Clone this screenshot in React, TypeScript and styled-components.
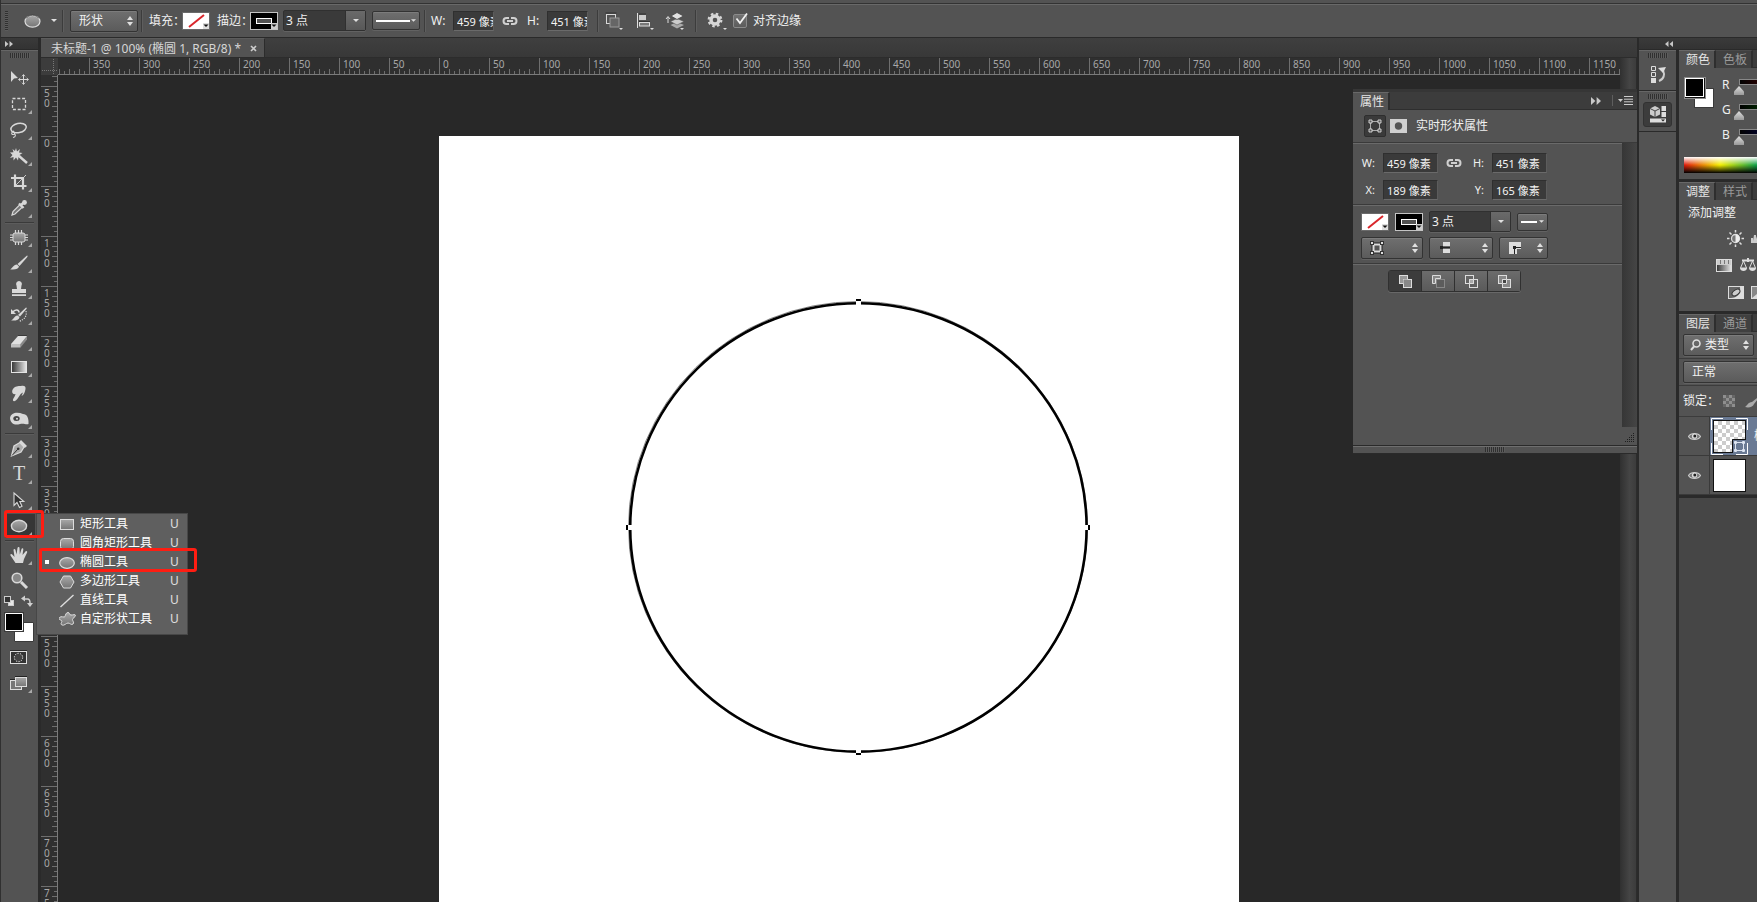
import React from "react";
import styled, { createGlobalStyle, css } from "styled-components";

const UI_FONT = `"Noto Sans", "Noto Sans CJK SC", sans-serif`;

const GlobalStyle = createGlobalStyle`
  *, *::before, *::after { box-sizing: border-box; }
  html, body { margin: 0; height: 100%; background: #282828; overflow: hidden; }
  button, input, select { font: inherit; color: inherit; margin: 0; padding: 0; border: 0; border-radius: 0; background: none; }
  ul { list-style: none; margin: 0; padding: 0; }
  svg { display: block; flex: none; }
`;

/* ---------- shared parts ---------- */

const edge = "#2a2a2a";
const panel = "#535353";

const raised = css`
  background: linear-gradient(#6f6f6f, #5b5b5b);
  border: 1px solid #333;
  border-radius: 2px;
  box-shadow: 0 1px 0 #626262, inset 0 1px 0 #7c7c7c;
`;

const Shell = styled.div`
  display: flex;
  flex-direction: column;
  width: 100%;
  height: 100vh;
  overflow: hidden;
  font-family: ${UI_FONT};
  font-size: 12px;
  line-height: 16px;
  color: #f0f0f0;
  background: #282828;
`;

const Grip = styled.div<{ $vertical?: boolean }>`
  flex: none;
  width: ${(p) => (p.$vertical ? "3px" : "20px")};
  height: ${(p) => (p.$vertical ? "20px" : "5px")};
  background: repeating-linear-gradient(
    ${(p) => (p.$vertical ? "180deg" : "90deg")},
    #303030 0 1px,
    #5c5c5c 1px 2px
  );
`;

const Gap = styled.span<{ $w: number }>`
  flex: none;
  width: ${(p) => p.$w}px;
`;

const Rule = styled.span<{ $h?: number }>`
  flex: none;
  width: 2px;
  height: ${(p) => p.$h ?? 22}px;
  background: #3c3c3c;
  border-right: 1px solid #5e5e5e;
`;

const FieldInput = styled.input<{ $w?: number }>`
  width: ${(p) => p.$w ?? 55}px;
  height: 20px;
  padding: 0 0 0 3px;
  font-size: 11px;
  background: #3a3a3a;
  border: 1px solid #2f2f2f;
  border-bottom-color: #6a6a6a;
  border-right-color: #5c5c5c;
  color: #f4f4f4;
  outline: none;
`;

const SelectBox = styled.div<{ $w: number }>`
  position: relative;
  flex: none;
  width: ${(p) => p.$w}px;
  height: 22px;
  ${raised}
  select {
    appearance: none;
    width: 100%;
    height: 20px;
    padding: 0 16px 0 8px;
    display: block;
    outline: none;
  }
  svg {
    position: absolute;
    right: 4px;
    top: 5px;
    pointer-events: none;
  }
`;

const FaceButton = styled.button<{ $w: number; $h?: number; $tight?: boolean }>`
  flex: none;
  display: flex;
  align-items: center;
  justify-content: space-between;
  width: ${(p) => p.$w}px;
  height: ${(p) => p.$h ?? 22}px;
  padding: ${(p) => (p.$tight ? "0 3px" : "0 4px 0 8px")};
  ${raised}
`;

const PlainButton = styled.button`
  display: flex;
  align-items: center;
  justify-content: center;
`;

const UpDown = () => (
  <svg width="6" height="10" viewBox="0 0 6 10" fill="#e0e0e0">
    <path d="M3 0 6 4H0zM0 6h6L3 10z" />
  </svg>
);

const Caret = ({ size = 6 }: { size?: number }) => (
  <svg width={size} height="3" viewBox="0 0 6 3" fill="#e0e0e0">
    <path d="M0 0h6L3 3z" />
  </svg>
);

const ComboBox = styled.div<{ $w: number }>`
  flex: none;
  display: flex;
  width: ${(p) => p.$w}px;
  height: 21px;
  border: 1px solid #303030;
  border-radius: 2px;
  box-shadow: 0 1px 0 #626262;
  background: #3a3a3a;
  input {
    flex: 1;
    min-width: 0;
    padding-left: 2px;
    outline: none;
  }
  button {
    flex: none;
    width: 20px;
    display: flex;
    align-items: center;
    justify-content: center;
    border-left: 1px solid #303030;
    background: linear-gradient(#6a6a6a, #585858);
  }
`;

const Combo = ({ w, label }: { w: number; label: string }) => (
  <ComboBox $w={w}>
    <input aria-label={label} defaultValue="3 点" />
    <button aria-label={label + "选项"}>
      <Caret />
    </button>
  </ComboBox>
);

const SwatchButton = styled.button<{ $dark?: boolean }>`
  flex: none;
  width: 28px;
  height: 18px;
  border: 1px solid ${(p) => (p.$dark ? "#c4c4c4" : "#6a6a6a")};
  background: ${(p) => (p.$dark ? "#000" : "#fff")};
`;

const FillSwatch = () => (
  <SwatchButton aria-label="填充">
    <svg width="26" height="16" viewBox="0 0 26 16">
      <path d="M6 14 21 2" stroke="#d9262b" strokeWidth="2" />
      <path d="M20 10h6v6h-6z" fill="#ddd" />
      <path d="M20.500 11.500h5L23 14z" fill="#111" />
    </svg>
  </SwatchButton>
);

const StrokeSwatch = () => (
  <SwatchButton $dark aria-label="描边">
    <svg width="26" height="16" viewBox="0 0 26 16">
      <rect x="5.500" y="5.500" width="15" height="5" fill="#535353" stroke="#fff" />
      <path d="M20 10h6v6h-6z" fill="#ccc" />
      <path d="M20.500 11.500h5L23 14z" fill="#111" />
    </svg>
  </SwatchButton>
);

const LinkIcon = () => (
  <svg width="16" height="10" viewBox="0 0 16 10" fill="none" stroke="#d0d0d0" strokeWidth="2">
    <path d="M7 2H4.500a3 3 0 0 0 0 6H7M9 2h2.500a3 3 0 0 1 0 6H9M5 5h6" />
  </svg>
);

const LineFace = ({ length }: { length: number }) => (
  <svg width={length} height="2" viewBox={`0 0 ${length} 2`}>
    <path d={`M0 1h${length}`} stroke="#fff" strokeWidth="2" />
  </svg>
);

const TabStrip = styled.div`
  display: flex;
  flex: none;
  height: 18px;
  background: #3c3c3c;
  border-bottom: 1px solid #2e2e2e;
`;

const Tab = styled.button<{ $active?: boolean }>`
  flex: none;
  width: 37px;
  height: 18px;
  padding-left: 3px;
  line-height: 16px;
  color: ${(p) => (p.$active ? "#e6e6e6" : "#9a9a9a")};
  background: ${(p) => (p.$active ? panel : "#404040")};
  border-right: 2px solid #2e2e2e;
  border-top: 1px solid ${(p) => (p.$active ? "#686868" : "#4a4a4a")};
`;

/* ---------- options bar ---------- */

const OptionsBar = styled.header`
  flex: none;
  display: flex;
  flex-direction: column;
  height: 38px;
  background: ${panel};
  border-left: 1px solid #303030;
  border-bottom: 1px solid #2a2a2a;
  &::before {
    content: "";
    flex: none;
    height: 5px;
    border-bottom: 1px solid #696969;
    box-shadow: inset 0 -1px 0 #333;
  }
`;

const OptionsRow = styled.div`
  flex: 1;
  display: flex;
  align-items: center;
  padding: 0 0 1px 4px;
  min-width: 0;
  white-space: nowrap;
`;

const Caption = styled.span<{ $w: number }>`
  flex: none;
  width: ${(p) => p.$w}px;
  white-space: nowrap;
`;

const CheckLabel = styled.label`
  position: relative;
  display: flex;
  align-items: center;
  gap: 6px;
  input {
    appearance: none;
    width: 14px;
    height: 14px;
    border: 1px solid #8a8a8a;
    border-radius: 2px;
    background: linear-gradient(#727272, #5c5c5c);
  }
  svg {
    position: absolute;
    left: 1px;
    top: -1px;
  }
`;

const ToolPicker = styled(PlainButton)`
  gap: 10px;
`;

const CornerCaret = () => <path d="M0 0h4L2 2z" fill="#ddd" />;

const EllipseIcon = () => (
  <svg width="17" height="14" viewBox="0 0 17 14">
    <ellipse cx="8.500" cy="7.300" rx="7.500" ry="5.800" fill="url(#steel)" stroke="#ddd" strokeWidth="1.200" />
    <path d="M2 4.500C5 0 12 0 15 4.500" fill="none" stroke="#333" strokeWidth=".8" />
  </svg>
);

const TopBar = () => (
  <OptionsBar>
    <OptionsRow>
      <Grip $vertical />
      <Gap $w={16} />
      <ToolPicker aria-label="椭圆工具预设">
        <EllipseIcon />
        <Caret />
      </ToolPicker>
      <Gap $w={5} />
      <Rule />
      <Gap $w={6} />
      <SelectBox $w={68}>
        <select aria-label="工具模式" defaultValue="形状">
          <option>形状</option>
        </select>
        <UpDown />
      </SelectBox>
      <Gap $w={3} />
      <Rule />
      <Gap $w={6} />
      <Caption $w={33}>填充：</Caption>
      <FillSwatch />
      <Gap $w={7} />
      <Caption $w={33}>描边：</Caption>
      <StrokeSwatch />
      <Gap $w={5} />
      <Combo w={83} label="描边宽度" />
      <Gap $w={6} />
      <FaceButton $w={48} $h={19} $tight aria-label="描边类型">
        <LineFace length={34} />
        <Caret size={5} />
      </FaceButton>
      <Gap $w={4} />
      <Rule />
      <Gap $w={5} />
      <Caption as="label" $w={22} htmlFor="opt-w">W:</Caption>
      <FieldInput id="opt-w" $w={41} defaultValue="459 像素" />
      <Gap $w={8} />
      <PlainButton aria-label="链接宽高">
        <LinkIcon />
      </PlainButton>
      <Gap $w={9} />
      <Caption as="label" $w={20} htmlFor="opt-h">H:</Caption>
      <FieldInput id="opt-h" $w={41} defaultValue="451 像素" />
      <Gap $w={9} />
      <Rule />
      <Gap $w={6} />
      <PlainButton aria-label="路径操作">
        <svg width="18" height="20" viewBox="0 0 18 20" fill="none">
          <rect x="1.500" y="3.500" width="9" height="9" stroke="#d8d8d8" />
          <rect x="5" y="7" width="9" height="9" fill="#666" stroke="#999" />
          <path d="M0.500 2h11" stroke="#333" />
          <g transform="translate(14 17)"><CornerCaret /></g>
        </svg>
      </PlainButton>
      <Gap $w={13} />
      <PlainButton aria-label="路径对齐方式">
        <svg width="18" height="20" viewBox="0 0 18 20" fill="none">
          <path d="M1.500 2v15" stroke="#e0e0e0" />
          <rect x="3" y="4" width="7" height="5" fill="#ccc" />
          <rect x="3.500" y="11.500" width="10" height="3.500" fill="#777" stroke="#ddd" />
          <path d="M3 3h7M3 10.500h11" stroke="#333" />
          <g transform="translate(14 17)"><CornerCaret /></g>
        </svg>
      </PlainButton>
      <Gap $w={11} />
      <PlainButton aria-label="路径排列方式">
        <svg width="20" height="20" viewBox="0 0 20 20">
          <path d="M3 6v6M1 8l2-2.500L5 8" fill="none" stroke="#ddd" />
          <path d="M12 11l7 3-7 3.500L5.500 14z" fill="#aaa" />
          <path d="M12 7.500l7 3-7 3.500-6.500-3.500z" fill="#ccc" stroke="#555" strokeWidth=".6" />
          <path d="M12 1.500 18.500 5 12 8.500 6 5z" fill="#e2e2e2" stroke="#444" strokeWidth=".8" />
          <g transform="translate(15 17)"><CornerCaret /></g>
        </svg>
      </PlainButton>
      <Gap $w={10} />
      <Rule />
      <Gap $w={10} />
      <PlainButton aria-label="其他选项">
        <svg width="20" height="20" viewBox="0 0 20 20">
          <circle cx="8" cy="9" r="4" fill="none" stroke="#d6d6d6" strokeWidth="3.400" />
          <circle cx="8" cy="9" r="6.300" fill="none" stroke="#d6d6d6" strokeWidth="2.200" strokeDasharray="2.500 2.450" />
          <g transform="translate(16 17)"><CornerCaret /></g>
        </svg>
      </PlainButton>
      <Gap $w={6} />
      <CheckLabel>
        <input type="checkbox" defaultChecked />
        对齐边缘
        <svg width="15" height="15" viewBox="0 0 15 15">
          <path d="M2.500 6.500 6 11 13 1.500" fill="none" stroke="#f2f2f2" strokeWidth="1.800" />
        </svg>
      </CheckLabel>
    </OptionsRow>
  </OptionsBar>
);

/* ---------- tool column ---------- */

const Workspace = styled.div`
  position: relative;
  flex: 1;
  display: flex;
  min-height: 0;
`;

const ToolColumn = styled.nav`
  flex: none;
  display: flex;
  flex-direction: column;
  width: 41px;
  background: ${panel};
  border-left: 1px solid #303030;
  border-right: 3px solid ${edge};
`;

const DarkHeader = styled.div`
  flex: none;
  display: flex;
  align-items: center;
  height: 12px;
  padding-left: 4px;
  background: linear-gradient(#3a3a3a, #333);
  border-bottom: 1px solid ${edge};
`;

const GripRow = styled.div`
  flex: none;
  display: flex;
  justify-content: center;
  padding-top: 2px;
  height: 15px;
  border-top: 1px solid #666;
`;

const ToolButton = styled.button<{ $active?: boolean }>`
  flex: none;
  display: block;
  width: 37px;
  height: 26px;
  padding: 0;
  background: ${(p) =>
    p.$active ? "linear-gradient(#363636, #363636) 4px 1px / 30px 24px no-repeat" : "none"};
`;

const ToolDivider = styled.div`
  flex: none;
  height: 3px;
  margin: 0 4px;
  border-top: 1px solid ${panel};
  background: linear-gradient(#3a3a3a 0 1px, #5c5c5c 1px);
`;

const DoubleChevron = ({ left, large }: { left?: boolean; large?: boolean }) => (
  <svg width={large ? 10 : 8} height={large ? 8 : 6} viewBox="0 0 8 6" preserveAspectRatio="none" fill="#c8c8c8">
    {left ? <path d="M3.500 0v6L0 3zM8 0v6L4.500 3z" /> : <path d="M0 0v6l3.500-3zM4.500 0v6L8 3z" />}
  </svg>
);

const L = "#d8d8d8";

type Tool = { name: string; art: React.ReactNode; single?: boolean; active?: boolean };

const groups: Tool[][] = [
  [
    {
      name: "移动工具",
      single: true,
      art: (
        <>
          <path d="M-8-7v11l3-3.500 4-.5z" fill={L} />
          <path d="M4.500-3v9M0 1.500h9" stroke={L} />
          <path d="M3-1.700 4.500-3.500 6-1.700M3 4.700 4.500 6.500 6 4.700M1.300 0-.5 1.500l1.800 1.500M7.700 0 9.500 1.500 7.700 3" fill="none" stroke={L} strokeWidth=".9" />
        </>
      ),
    },
    { name: "矩形选框工具", art: <rect x="-6.500" y="-5.500" width="13" height="11" fill="none" stroke={L} strokeWidth="1.300" strokeDasharray="3 1.800" /> },
    {
      name: "套索工具",
      art: (
        <g fill="none" stroke={L} strokeWidth="1.500">
          <ellipse cx="0" cy="-2" rx="7.800" ry="4.600" transform="rotate(-12)" />
          <path d="M-5 1c-3 1-3 4-.5 3.500 2-.6 1-3-1-2.500M-5 4c2 .5 2 3-1 3.500" strokeWidth="1.100" />
        </g>
      ),
    },
    {
      name: "魔棒工具",
      art: (
        <>
          <path d="M0 0 8 7" stroke={L} strokeWidth="2.400" />
          <path d="M-3-8l1 3.500 3-2.500L0-3.500l3.500.5-3 2 2.500 3-3.500-1L-1 4.500-3 1.500-5.500 4.500-5.500 1-9 2l2.500-3L-9-3.500l3.500-.2L-6.500-7l2.500 2z" fill={L} />
        </>
      ),
    },
    {
      name: "裁剪工具",
      art: (
        <>
          <path d="M-4-7.500V4h11.500M-8-4h12V7.500" fill="none" stroke={L} strokeWidth="2.200" />
          <path d="M-3 3 7-7" stroke={L} strokeWidth=".9" />
        </>
      ),
    },
    {
      name: "吸管工具",
      art: (
        <>
          <path d="M-7 7l1-3.500L1-3.500 3.500-1-4 6z" fill="#777" stroke={L} strokeWidth="1.200" />
          <path d="M0-4.500 4.500 0M2-3l4-3.500" stroke={L} strokeWidth="2.400" />
          <circle cx="5.500" cy="-5.500" r="2.400" fill={L} />
        </>
      ),
    },
  ],
  [
    {
      name: "修补工具",
      art: (
        <>
          <rect x="-6" y="-4" width="12" height="9" rx="2" fill="url(#steel)" stroke={L} />
          <path d="M-3.500-7v3M-.5-7v3M2.500-7v3M-3.500 5v3M-.5 5v3M2.500 5v3M-9-2h3M-9 .500h3M-9 3h3M6-2h3M6 .500h3M6 3h3" stroke={L} strokeWidth="1.200" />
        </>
      ),
    },
    {
      name: "画笔工具",
      art: (
        <>
          <path d="M8-7.500c1 0 .8 1-.5 2.500L.5 3-1.500 1z" fill={L} />
          <path d="M-2 1.500 0 3.500C-.500 6-4 7-9 6.300-6.500 5.500-6 2-2 1.500z" fill={L} />
        </>
      ),
    },
    { name: "仿制图章工具", art: <path d="M0-8a3 3 0 0 1 2.500 4.500L2 0h5v4H-7V0h5l-.5-3.500A3 3 0 0 1 0-8zM-7 5.300H7V7H-7z" fill={L} /> },
    {
      name: "历史记录画笔工具",
      art: (
        <>
          <path d="M7-7.500c1 0 1 1 0 2L1 1.500-1 0zM-1.500.500.500 2C0 5-3 6-8 5.500-5 4.500-5 1-1.500.500z" fill={L} />
          <path d="M-6.500-2.500C-4-6 0-5.500 0-2.500" fill="none" stroke={L} strokeWidth="1.600" />
          <path d="M-8-6v5h5z" fill={L} />
          <path d="M7-4C8 1 6 4 0 6.500" fill="none" stroke={L} strokeWidth="1.200" strokeDasharray="1.200 1.200" />
        </>
      ),
    },
    {
      name: "橡皮擦工具",
      art: (
        <>
          <path d="M1.500 3 8-5v3.500L1.500 6.500z" fill="#8a8a8a" />
          <path d="M-8 3-1-5h9L1.500 3z" fill="#e0e0e0" />
          <path d="M-8 3h9.500v3.500H-8z" fill="#c0c0c0" />
          <path d="M-1-5.500h9" stroke="#333" strokeWidth=".8" />
        </>
      ),
    },
    { name: "渐变工具", art: <rect x="-7.500" y="-5.500" width="15" height="11" fill="url(#fade)" stroke="#e4e4e4" /> },
    {
      name: "涂抹工具",
      art: (
        <path
          d="M-6-4c2-3 5-3 8-3 3-.5 5 0 4.500 3C6-1 5 2 2.500 3L4-.500C2 0 1 2-1 5c-1.500 3-4.500 4-5 2.500C-6.500 6-4 4-3.500 1-7 2-7.500-2-6-4z"
          fill={L}
        />
      ),
    },
    {
      name: "海绵工具",
      art: (
        <>
          <path d="M-9-1C-8-7-1-7 4-5c4 0 6 4 5.500 10C7 6 5 4 1 5-4 6.500-8.500 5-9-1z" fill={L} />
          <ellipse cx="-2.500" cy="-.5" rx="3.200" ry="2.500" fill="#444" />
          <circle cx="-2" cy="-.3" r="1" fill={L} />
        </>
      ),
    },
  ],
  [
    {
      name: "钢笔工具",
      art: (
        <>
          <path d="M-7.500 8-5-2 1-5.500 5-1 2 4z" fill="#aaa" stroke={L} strokeWidth="1.300" />
          <path d="M-7 7.500-1 1" stroke="#333" />
          <circle cx="-.8" cy=".8" r="1.300" fill="#333" />
          <path d="M2-8 8-2 5.800 0 0-5.800z" fill={L} />
        </>
      ),
    },
    {
      name: "横排文字工具",
      art: (
        <text x="0" y="6" textAnchor="middle" fontFamily="Liberation Serif, serif" fontSize="20" fill={L}>
          T
        </text>
      ),
    },
    { name: "路径选择工具", art: <path d="M-5-7V5.500l3-3 2.500 5 2.500-1.200L.8 1.500h4z" fill="#333" stroke={L} strokeWidth="1.100" /> },
    {
      name: "椭圆工具",
      active: true,
      art: <ellipse cx="0" cy="0" rx="7.600" ry="5.700" fill="url(#steel)" stroke={L} strokeWidth="1.400" />,
    },
  ],
  [
    {
      name: "抓手工具",
      art: (
        <path
          d="M-3.500 8-8.500.5c-.6-1.500 1-2 2-.8L-4.500 2-5.500-5c0-1.300 1.600-1.500 2 0l1 4.500L-1.500-7c.2-1.300 2-1.300 2 0l.3 6.500L2.500-6c.4-1.300 2-1 1.800.4L3.500 0 6.500-3.500c1-1 2.200 0 1.500 1.200L5 4 4 8z"
          fill={L}
        />
      ),
    },
    {
      name: "缩放工具",
      single: true,
      art: (
        <>
          <circle cx="-2" cy="-3" r="4.800" fill="#888" stroke={L} strokeWidth="1.600" />
          <path d="M2 1 8 7" stroke={L} strokeWidth="3" />
        </>
      ),
    },
  ],
];

const ToolGlyph = ({ tool }: { tool: Tool }) => (
  <svg width="37" height="26" viewBox="0 0 37 26">
    <g transform="translate(18 13)">{tool.art}</g>
    {!tool.single && <path d="M31 19v4h-4z" fill="#aaa" />}
  </svg>
);

const ColorControls = styled.div`
  flex: none;
  height: 50px;
`;

const Toolbar = () => (
  <ToolColumn aria-label="工具">
    <DarkHeader>
      <DoubleChevron />
    </DarkHeader>
    <GripRow>
      <Grip />
    </GripRow>
    {groups.map((group, i) => (
      <React.Fragment key={i}>
        {i > 0 && <ToolDivider />}
        {group.map((tool) => (
          <ToolButton key={tool.name} $active={tool.active} aria-label={tool.name}>
            <ToolGlyph tool={tool} />
          </ToolButton>
        ))}
      </React.Fragment>
    ))}
    <ColorControls>
      <svg width="37" height="50" viewBox="0 1 37 50">
        <rect x="7.500" y="7.500" width="5" height="5" fill="#e6e6e6" stroke="#ccc" />
        <rect x="3.500" y="3.500" width="6" height="6" fill="#333" stroke="#ccc" />
        <path d="M23 6h3.500Q29 6 29 10v1" fill="none" stroke="#d0d0d0" strokeWidth="1.500" />
        <path d="M20 5.500l4-3v6zM26 10h6l-3 4z" fill="#d0d0d0" />
        <path d="M13.500 29.500h19v19h-19z" fill="#fff" stroke="#3a3a3a" />
        <path d="M3 19h20v20H3z" fill="#3a3a3a" />
        <path d="M4.500 20.500h17v17h-17z" fill="#000" stroke="#fff" />
      </svg>
    </ColorControls>
    <ToolButton aria-label="以快速蒙版模式编辑">
      <svg width="37" height="26" viewBox="0 0 37 26">
        <path d="M9 6.500h17" stroke="#2a2a2a" />
        <rect x="9.500" y="7.500" width="16" height="12" fill="#333" stroke="#ddd" />
        <circle cx="17.500" cy="13.500" r="4.200" fill="#444" stroke="#eee" strokeDasharray="1.300 1.300" />
      </svg>
    </ToolButton>
    <ToolButton aria-label="更改屏幕模式">
      <svg width="37" height="26" viewBox="0 0 37 26">
        <path d="M9 9.500h6M14 6.500h12" stroke="#222" />
        <rect x="9.500" y="10.500" width="11" height="9" fill="#777" stroke="#ddd" />
        <rect x="14.500" y="7.500" width="11" height="9" fill="url(#steel)" stroke="#ddd" />
        <path d="M31 19v4h-4z" fill="#aaa" />
      </svg>
    </ToolButton>
  </ToolColumn>
);

/* ---------- shape tool fly-out ---------- */

const Flyout = styled.div`
  position: absolute;
  left: 36px;
  top: 475px;
  width: 152px;
  padding-bottom: 6px;
  background: #5f5f5f;
  border: 1px solid #474747;
`;

const FlyoutItem = styled.button`
  display: flex;
  align-items: center;
  width: 100%;
  height: 19px;
  padding-left: 8px;
  text-align: left;
  color: #fff;
  svg {
    margin: 0 4px 0 10px;
  }
`;

const Bullet = styled.span<{ $on?: boolean }>`
  flex: none;
  width: 4px;
  height: 4px;
  background: ${(p) => (p.$on ? "#fff" : "transparent")};
`;

const ItemName = styled.span`
  flex: 1;
`;

const KeyHint = styled.span`
  width: 17px;
  color: #e0e0e0;
`;

const shapeTools = [
  { name: "矩形工具", art: <rect x="1.500" y="4.500" width="13" height="10" fill="url(#steel)" stroke="#ddd" /> },
  { name: "圆角矩形工具", art: <rect x="1.500" y="4.500" width="13" height="11" rx="3" fill="url(#steel)" stroke="#ddd" /> },
  { name: "椭圆工具", art: <ellipse cx="8" cy="10" rx="7.300" ry="5.400" fill="url(#steel)" stroke="#ddd" strokeWidth="1.200" />, on: true },
  { name: "多边形工具", art: <path d="M4.500 4h7L15 10l-3.500 6h-7L1 10z" fill="url(#steel)" stroke="#ddd" /> },
  { name: "直线工具", art: <path d="M1.500 16 14.500 4" stroke="#ddd" strokeWidth="1.400" /> },
  { name: "自定形状工具", art: <path d="M9 2.500c2 0 1 2.500 3 2.500s4.500-1 4.500.5-3 2.500-3 4 2 3 .5 4.500-3-1-5-1-3.500 3-6 2S4 11.500 2.500 10.500-1 9.500.5 7.500s5 .500 5.500-1S7 2.500 9 2.500z" fill="url(#steel)" stroke="#ddd" /> },
];

const Highlight = styled.div<{ $x: number; $y: number; $w: number; $h: number }>`
  position: absolute;
  left: ${(p) => p.$x}px;
  top: ${(p) => p.$y}px;
  width: ${(p) => p.$w}px;
  height: ${(p) => p.$h}px;
  border: 3px solid #ff1d12;
  border-radius: 3px;
  pointer-events: none;
`;

const ShapeFlyout = () => (
  <Flyout role="menu">
    {shapeTools.map((t) => (
      <FlyoutItem key={t.name} role="menuitem">
        <Bullet $on={t.on} />
        <svg width="17" height="18" viewBox="0 0 17 18">{t.art}</svg>
        <ItemName>{t.name}</ItemName>
        <KeyHint>U</KeyHint>
      </FlyoutItem>
    ))}
  </Flyout>
);

/* ---------- document window ---------- */

const DocumentWindow = styled.main`
  flex: 1;
  min-width: 0;
  display: flex;
  flex-direction: column;
`;

const DocTabs = styled.div`
  flex: none;
  display: flex;
  height: 20px;
  background: linear-gradient(#3f3f3f, #383838);
  border-bottom: 1px solid #2c2c2c;
`;

const DocTab = styled.div`
  display: flex;
  align-items: center;
  gap: 9px;
  padding: 1px 7px 0 10px;
  background: ${panel};
  border-right: 1px solid #2c2c2c;
  border-top: 1px solid #5c5c5c;
  color: #d6d6d6;
  white-space: nowrap;
`;

const DocBody = styled.div`
  flex: 1;
  min-height: 0;
  display: grid;
  grid-template-columns: 17px minmax(0, 1fr) 17px;
  grid-template-rows: 17px minmax(0, 1fr);
`;

const Corner = styled.div`
  background:
    repeating-linear-gradient(#3c3c3c 0 1px, transparent 1px 2px) 12px 0 / 1px 100% no-repeat,
    repeating-linear-gradient(90deg, #3c3c3c 0 1px, transparent 1px 2px) 0 12px / 100% 1px no-repeat,
    linear-gradient(#777, #777) 12px 0 / 1px 100% no-repeat,
    linear-gradient(#777, #777) 0 12px / 100% 1px no-repeat,
    #3c3c3c;
`;

const RulerX = styled.div`
  display: flex;
  overflow: hidden;
  padding-left: 31px;
  border-bottom: 1px solid #7a7a7a;
  font-size: 10px;
  line-height: 13px;
  color: #a8a8a8;
  background:
    repeating-linear-gradient(90deg, #6e6e6e 0 1px, transparent 1px 50px) -19px 0 / 3000px 100% no-repeat,
    repeating-linear-gradient(90deg, #6e6e6e 0 1px, transparent 1px 10px) 1px 100% / 3000px 5px no-repeat,
    repeating-linear-gradient(90deg, #6e6e6e 0 1px, transparent 1px 5px) 1px 100% / 3000px 3px no-repeat,
    #2f2f2f;
  span {
    flex: none;
    width: 50px;
    padding-left: 4px;
  }
`;

const RulerY = styled.div`
  overflow: hidden;
  padding-top: 11px;
  border-right: 1px solid #7a7a7a;
  font-size: 10px;
  line-height: 10px;
  color: #a8a8a8;
  background:
    repeating-linear-gradient(#6e6e6e 0 1px, transparent 1px 50px) 0 -39px / 100% 3000px no-repeat,
    repeating-linear-gradient(#6e6e6e 0 1px, transparent 1px 10px) 100% 1px / 5px 3000px no-repeat,
    repeating-linear-gradient(#6e6e6e 0 1px, transparent 1px 5px) 100% 1px / 3px 3000px no-repeat,
    #2f2f2f;
`;

const RulerMark = styled.div`
  display: flex;
  flex-direction: column;
  height: 50px;
  padding: 2px 0 0 3px;
`;

const ScrollTrack = styled.div`
  grid-column: 3;
  grid-row: 1 / 3;
  background: linear-gradient(90deg, #303030, #454545 60%, #3c3c3c);
  border-right: 1px solid #2c2c2c;
`;

const Pasteboard = styled.div`
  position: relative;
  overflow: hidden;
  background: #282828;
`;

const Artboard = styled.div`
  position: absolute;
  left: 381px;
  top: 61px;
  width: 800px;
  height: 800px;
  background: #fff;
`;

const EllipseShape = styled.svg`
  position: absolute;
  left: 184px;
  top: 160px;
`;

const anchors = [
  { x: 235, y: 5, dx: 0, dy: 2 },
  { x: 235, y: 456, dx: 0, dy: -2 },
  { x: 5, y: 231, dx: 2, dy: 0 },
  { x: 464, y: 231, dx: -2, dy: 0 },
];

const xLabels = Array.from({ length: 31 }, (_, i) => Math.abs(-350 + i * 50));
const yLabels = Array.from({ length: 17 }, (_, i) => Math.abs(-50 + i * 50));

const Document = () => (
  <DocumentWindow>
    <DocTabs>
      <DocTab>
        <span>未标题-1 @ 100% (椭圆 1, RGB/8) *</span>
        <PlainButton aria-label="关闭">
          <svg width="7" height="7" viewBox="0 0 7 7">
            <path d="M1 1l5 5M6 1 1 6" stroke="#ccc" strokeWidth="1.600" />
          </svg>
        </PlainButton>
      </DocTab>
    </DocTabs>
    <DocBody>
      <Corner />
      <RulerX>
        {xLabels.map((n, i) => (
          <span key={i}>{n}</span>
        ))}
      </RulerX>
      <ScrollTrack />
      <RulerY>
        {yLabels.map((n, i) => (
          <RulerMark key={i}>
            {String(n).split("").map((d, k) => (
              <span key={k}>{d}</span>
            ))}
          </RulerMark>
        ))}
      </RulerY>
      <Pasteboard>
        <Artboard>
          <EllipseShape width="470" height="462" viewBox="0 0 470 462">
            <ellipse cx="235" cy="231" rx="229.500" ry="225.500" fill="none" stroke="#888" strokeWidth="1" />
            <ellipse cx="235.400" cy="231.400" rx="228.200" ry="224.200" fill="none" stroke="#000" strokeWidth="2.600" />
            {anchors.map((a, i) => (
              <g key={i} shapeRendering="crispEdges">
                <rect x={a.x - 2} y={a.y - 2} width="5" height="5" fill="#000" />
                <rect x={a.x - 2 + a.dx} y={a.y - 2 + a.dy} width="5" height="5" fill="#fff" />
              </g>
            ))}
          </EllipseShape>
        </Artboard>
      </Pasteboard>
    </DocBody>
  </DocumentWindow>
);

/* ---------- floating properties panel ---------- */

const PropsPanel = styled.section`
  position: absolute;
  right: 120px;
  top: 51px;
  width: 284px;
  height: 365px;
  display: flex;
  flex-direction: column;
  background: ${panel};
  border-top: 3px solid #363636;
`;

const PanelTools = styled.div`
  flex: 1;
  display: flex;
  align-items: center;
  justify-content: flex-end;
  gap: 5px;
  padding-right: 4px;
`;

const PropsHeader = styled.div`
  flex: none;
  display: flex;
  align-items: center;
  gap: 4px;
  height: 33px;
  padding-left: 11px;
  border-bottom: 1px solid #3a3a3a;
`;

const ModeButton = styled(PlainButton)<{ $active?: boolean }>`
  width: 22px;
  height: 22px;
  border-radius: 2px;
  background: ${(p) => (p.$active ? "#3a3a3a" : "none")};
  border: 1px solid ${(p) => (p.$active ? "#2e2e2e" : "transparent")};
`;

const PanelTitle = styled.span`
  padding-left: 5px;
`;

const PropsMain = styled.div`
  flex: 1;
  display: grid;
  grid-template-columns: 1fr 15px;
  grid-template-rows: 284px 1fr;
`;

const PropsContent = styled.div`
  border-top: 1px solid #6a6a6a;
`;

const PropsSection = styled.div`
  padding: 6px 8px 4px;
  border-bottom: 1px solid #3a3a3a;
  box-shadow: 0 1px 0 #6a6a6a;
`;

const MetricGrid = styled.div`
  display: grid;
  grid-template-columns: 14px 55px 16px 14px 55px;
  column-gap: 8px;
  row-gap: 7px;
  align-items: center;
  padding-top: 3px;
  label {
    font-size: 11px;
    text-align: right;
  }
`;

const ControlRow = styled.div`
  display: flex;
  align-items: center;
  gap: 6px;
  & + & {
    margin-top: 5px;
  }
`;

const PathOps = styled.div`
  display: flex;
  width: 133px;
  margin: 6px 0 0 35px;
  border: 1px solid #303030;
  border-radius: 3px;
  box-shadow: 0 1px 0 #686868;
`;

const PathOp = styled.button<{ $active?: boolean }>`
  flex: 1;
  display: flex;
  align-items: center;
  justify-content: center;
  height: 20px;
  background: ${(p) => (p.$active ? "#3c3c3c" : "linear-gradient(#6c6c6c, #5a5a5a)")};
  & + & {
    border-left: 1px solid #303030;
  }
`;

const PropsScroll = styled.div`
  background: linear-gradient(90deg, #363636, #454545);
`;

const Resizer = styled.div`
  grid-column: 1 / 3;
  display: flex;
  justify-content: flex-end;
  align-items: flex-end;
  padding: 0 2px 2px 0;
`;

const BottomGrip = styled.div`
  flex: none;
  display: flex;
  justify-content: center;
  height: 9px;
  padding-top: 1px;
  border-top: 1px solid #2a2a2a;
  border-bottom: 1px solid #2a2a2a;
  box-shadow: inset 0 1px 0 #6e6e6e;
`;

const MenuLines = () => (
  <svg width="15" height="9" viewBox="0 0 15 9">
    <path d="M0 3h5L2.500 6z" fill="#ccc" />
    <path d="M6 .500h9M6 3.200h9M6 5.800h9M6 8.500h9" stroke="#ccc" />
  </svg>
);

const opArt = [
  <>
    <rect x=".5" y=".5" width="8" height="8" fill="#999" stroke="#ddd" />
    <rect x="4.500" y="4.500" width="8" height="8" fill="#888" stroke="#ddd" />
    <path d="M4.500 4.500h4v4h-4z" fill="#888" />
  </>,
  <>
    <path d="M.500 8.500v-8h8v3h-5v5z" fill="#888" stroke="#ddd" />
    <rect x="4.500" y="4.500" width="8" height="8" fill="#5c5c5c" stroke="#888" />
  </>,
  <>
    <rect x=".5" y=".5" width="8" height="8" fill="none" stroke="#ddd" />
    <rect x="4.500" y="4.500" width="8" height="8" fill="none" stroke="#ddd" />
    <path d="M4.500 4.500h4v4h-4z" fill="#aaa" stroke="#ddd" />
  </>,
  <>
    <rect x=".5" y=".5" width="8" height="8" fill="#888" stroke="#ddd" />
    <rect x="4.500" y="4.500" width="8" height="8" fill="#888" stroke="#ddd" />
    <path d="M4.500 4.500h4v4h-4z" fill="#444" stroke="#ddd" />
  </>,
];
const opNames = ["合并形状", "减去顶层形状", "与形状区域相交", "排除重叠形状"];

const Properties = () => (
  <PropsPanel>
    <TabStrip>
      <Tab $active>属性</Tab>
      <PanelTools>
        <PlainButton aria-label="折叠面板">
          <DoubleChevron large />
        </PlainButton>
        <Gap $w={0} />
        <Rule $h={11} />
        <PlainButton aria-label="面板菜单">
          <MenuLines />
        </PlainButton>
      </PanelTools>
    </TabStrip>
    <PropsHeader>
      <ModeButton $active aria-label="形状属性">
        <svg width="14" height="14" viewBox="0 0 14 14" fill="none" stroke="#ddd">
          <rect x="2.500" y="2.500" width="9" height="9" stroke="#aaa" />
          <path d="M1 1h3v3H1zM10 1h3v3h-3zM1 10h3v3H1zM10 10h3v3h-3z" fill="#555" strokeWidth=".9" />
        </svg>
      </ModeButton>
      <PlainButton aria-label="蒙版">
        <svg width="17" height="14" viewBox="0 0 17 14">
          <rect width="17" height="14" fill="#d0d0d0" />
          <circle cx="8.500" cy="7" r="3.700" fill="#555" />
        </svg>
      </PlainButton>
      <PanelTitle>实时形状属性</PanelTitle>
    </PropsHeader>
    <PropsMain>
      <PropsContent>
        <PropsSection>
          <MetricGrid>
            <label htmlFor="p-w">W:</label>
            <FieldInput id="p-w" defaultValue="459 像素" />
            <LinkIcon />
            <label htmlFor="p-h">H:</label>
            <FieldInput id="p-h" defaultValue="451 像素" />
            <label htmlFor="p-x">X:</label>
            <FieldInput id="p-x" defaultValue="189 像素" />
            <span />
            <label htmlFor="p-y">Y:</label>
            <FieldInput id="p-y" defaultValue="165 像素" />
          </MetricGrid>
        </PropsSection>
        <PropsSection>
          <ControlRow>
            <FillSwatch />
            <StrokeSwatch />
            <Combo w={82} label="形状描边宽度" />
            <FaceButton $w={31} $h={18} $tight aria-label="形状描边类型">
              <LineFace length={16} />
              <Caret size={5} />
            </FaceButton>
          </ControlRow>
          <ControlRow>
            <FaceButton $w={62} aria-label="描边对齐">
              <svg width="14" height="14" viewBox="0 0 14 14">
                <rect x="2" y="2" width="10" height="10" fill="#ddd" stroke="#222" />
                <rect x="4.500" y="4.500" width="5" height="5" fill="#555" />
                <path d="M0 0h4v4H0zM10 0h4v4h-4zM0 10h4v4H0zM10 10h4v4h-4z" fill="#333" />
                <path d="M1 1h2v2H1zM11 1h2v2h-2zM1 11h2v2H1zM11 11h2v2h-2z" fill="#ddd" />
              </svg>
              <UpDown />
            </FaceButton>
            <FaceButton $w={64} aria-label="描边端点">
              <svg width="14" height="14" viewBox="0 0 14 14">
                <path d="M5 1h7v4H5zM5 8h7v4H5z" fill="#ddd" />
                <path d="M3 6.500h9" stroke="#222" />
                <path d="M2 5h3v3H2z" fill="#222" />
              </svg>
              <UpDown />
            </FaceButton>
            <FaceButton $w={49} aria-label="描边连接">
              <svg width="14" height="14" viewBox="0 0 14 14">
                <path d="M1 1h12v7H9v5H1z" fill="#ddd" />
                <path d="M6.500 13V6.500H13" fill="none" stroke="#222" />
                <path d="M5 5h3v3H5z" fill="#222" />
              </svg>
              <UpDown />
            </FaceButton>
          </ControlRow>
        </PropsSection>
        <PathOps>
          {opArt.map((art, i) => (
            <PathOp key={i} $active={i === 0} aria-label={opNames[i]}>
              <svg width="13" height="13" viewBox="0 0 13 13">{art}</svg>
            </PathOp>
          ))}
        </PathOps>
      </PropsContent>
      <PropsScroll />
      <Resizer>
        <svg width="10" height="10" viewBox="0 0 10 10" fill="#1e1e1e">
          {[0, 1, 2, 3, 4].map((r) =>
            Array.from({ length: r + 1 }, (_, c) => (
              <rect key={`${r}-${c}`} x={8 - c * 2} y={r * 2} width="1" height="1" />
            )),
          )}
        </svg>
      </Resizer>
    </PropsMain>
    <BottomGrip>
      <Grip />
    </BottomGrip>
  </PropsPanel>
);

/* ---------- right-hand docks ---------- */

const RightSide = styled.aside`
  flex: none;
  display: flex;
  flex-direction: column;
  width: 120px;
  overflow: hidden;
  border-left: 2px solid ${edge};
`;

const RightHeader = styled(DarkHeader)`
  padding-left: 26px;
`;

const RightColumns = styled.div`
  flex: 1;
  display: flex;
  min-height: 0;
`;

const IconDock = styled.div`
  flex: none;
  width: 40px;
  background: ${panel};
  border-right: 3px solid ${edge};
`;

const DockGroup = styled.div`
  display: flex;
  flex-direction: column;
  align-items: center;
  height: 41px;
  padding-top: 2px;
  border-top: 1px solid #666;
  border-bottom: 1px solid ${edge};
`;

const DockButton = styled(PlainButton)<{ $active?: boolean }>`
  width: 29px;
  height: 25px;
  margin-top: 3px;
  border-radius: 3px;
  background: ${(p) => (p.$active ? "#3c3c3c" : "none")};
  border: 1px solid ${(p) => (p.$active ? "#323232" : "transparent")};
`;

const Panels = styled.div`
  flex: none;
  display: flex;
  flex-direction: column;
  width: 240px;
  background: #464646;
`;

const PanelBox = styled.section`
  flex: none;
  background: ${panel};
  border-bottom: 3px solid ${edge};
`;

const ColorBody = styled.div`
  display: grid;
  grid-template-columns: 38px 1fr;
  height: 111px;
  padding: 9px 0 6px 5px;
  align-content: space-between;
`;

const Channels = styled.div`
  display: flex;
  flex-direction: column;
  gap: 9px;
  label {
    display: flex;
    align-items: flex-start;
    gap: 2px;
    height: 16px;
  }
`;

const ChannelName = styled.span`
  width: 10px;
`;

const Slider = styled.input<{ $c: string }>`
  appearance: none;
  width: 150px;
  height: 17px;
  padding-top: 2px;
  &::-webkit-slider-runnable-track {
    height: 15px;
    background:
      linear-gradient(90deg, #000, ${(p) => p.$c}) 6px 1px / 140px 4px no-repeat,
      linear-gradient(#888, #888) 5px 0 / 142px 6px no-repeat;
  }
  &::-webkit-slider-thumb {
    appearance: none;
    width: 10px;
    height: 9px;
    margin-top: 7px;
    background: linear-gradient(#e0e0e0, #999);
    clip-path: polygon(50% 0, 100% 60%, 100% 100%, 0 100%, 0 60%);
  }
`;

const Spectrum = styled.div`
  grid-column: 1 / 3;
  height: 16px;
  background:
    linear-gradient(#fff, transparent 50%, #000),
    linear-gradient(90deg, #e0180c, #f5ef00 36px, #12a048 72px, #0a9ee0 110px, #1a2a90 150px, #d0107c 190px, #e0180c);
`;

const AdjustBody = styled.div`
  display: flex;
  flex-direction: column;
  gap: 11px;
  height: 111px;
  padding: 7px 0 0 9px;
  line-height: 12px;
`;

const AdjustRow = styled.div<{ $indent: number }>`
  display: flex;
  gap: 6px;
  height: 16px;
  padding-left: ${(p) => p.$indent}px;
`;

const LayerBar = styled.div<{ $h: number; $line?: boolean }>`
  display: flex;
  align-items: center;
  gap: 10px;
  height: ${(p) => p.$h}px;
  padding-left: 4px;
  border-bottom: ${(p) => (p.$line ? "1px solid #3c3c3c" : "none")};
`;

const FilterSelect = styled(SelectBox)`
  select {
    padding-left: 21px;
  }
  svg:first-child {
    right: auto;
    left: 6px;
    top: 4px;
  }
`;

const LayerRow = styled.li`
  display: flex;
  height: 39px;
  border-bottom: 1px solid #3a3a3a;
`;

const EyeButton = styled(PlainButton)`
  width: 31px;
  border-right: 1px solid #3a3a3a;
`;

const LayerFace = styled.div<{ $selected?: boolean }>`
  flex: 1;
  display: flex;
  align-items: center;
  gap: 6px;
  padding-left: 1px;
  background: ${(p) => (p.$selected ? "#6a7a94" : panel)};
`;

const Eye = () => (
  <svg width="13" height="10" viewBox="0 0 13 10">
    <path d="M.500 5.500C3 1.500 10 1.500 12.500 5.500 10 9.500 3 9.500.500 5.500z" fill="#777" stroke="#ccc" strokeWidth="1.200" />
    <circle cx="6.500" cy="5.200" r="2.600" fill="#ddd" />
    <circle cx="6.800" cy="5" r="1.500" fill="#222" />
  </svg>
);

const cells = Array.from({ length: 64 }, (_, i) => ({ x: i % 8, y: Math.floor(i / 8) })).filter((c) => (c.x + c.y) % 2 === 1);

const channels = [
  { name: "R", color: "#ff0000" },
  { name: "G", color: "#00ff00" },
  { name: "B", color: "#0000ff" },
];

const RightDocks = () => (
  <RightSide>
    <RightHeader>
      <DoubleChevron left />
    </RightHeader>
    <RightColumns>
      <IconDock>
        <DockGroup>
          <Grip />
          <DockButton aria-label="历史记录">
            <svg width="16" height="18" viewBox="0 0 16 18" fill="none">
              <path d="M1.500 1.500h4v4h-4zM1.500 7.500h4v4h-4z" stroke="#ddd" />
              <path d="M1 13h5v5H1z" fill="#ddd" />
              <path d="M9 16c5-2 6-6 4-11" stroke="#ccc" strokeWidth="2" />
              <path d="M8 3l8-1-3 6z" fill="#ddd" />
            </svg>
          </DockButton>
        </DockGroup>
        <DockGroup>
          <Grip />
          <DockButton $active aria-label="属性">
            <svg width="16" height="17" viewBox="0 0 16 17">
              <path d="M5 0l5 2.500v6L5 11 0 8.500v-6z" fill="#ccc" />
              <path d="M0 2.500 5 5l5-2.500M5 5v6" fill="none" stroke="#444" />
              <path d="M11.500 0H16v5h-4.500zM11.500 6H16v5h-4.500z" fill="#ddd" />
              <path d="M0 12.500h16v4H0z" fill="#ddd" />
              <path d="M11 13.500h4l-2 2z" fill="#222" />
            </svg>
          </DockButton>
        </DockGroup>
      </IconDock>
      <Panels>
        <PanelBox>
          <TabStrip>
            <Tab $active>颜色</Tab>
            <Tab>色板</Tab>
          </TabStrip>
          <ColorBody>
            <svg width="32" height="32" viewBox="0 0 32 32">
              <rect x="10.500" y="11.500" width="19" height="19" fill="#fff" stroke="#3a3a3a" />
              <rect x="0" y="0" width="22" height="22" fill="#8c8c8c" />
              <rect x="1" y="1" width="20" height="20" fill="#111" />
              <rect x="1.500" y="1.500" width="18" height="18" fill="#000" stroke="#fff" />
            </svg>
            <Channels>
              {channels.map((c) => (
                <label key={c.name}>
                  <ChannelName>{c.name}</ChannelName>
                  <Slider type="range" min="0" max="255" defaultValue="0" $c={c.color} />
                </label>
              ))}
            </Channels>
            <Spectrum />
          </ColorBody>
        </PanelBox>
        <PanelBox>
          <TabStrip>
            <Tab $active>调整</Tab>
            <Tab>样式</Tab>
          </TabStrip>
          <AdjustBody>
            <span>添加调整</span>
            <AdjustRow $indent={39}>
              <svg width="17" height="17" viewBox="0 0 17 17">
                <circle cx="8.500" cy="8.500" r="4" fill="#777" stroke="#ddd" strokeWidth="1.300" />
                <path d="M8.500 4.500a4 4 0 0 1 0 8z" fill="#eee" />
                <path d="M8.500 0v2.500M8.500 14.500V17M0 8.500h2.500M14.500 8.500H17M2.500 2.500l2 2M12.500 12.500l2 2M2.500 14.500l2-2M12.500 4.500l2-2" stroke="#ddd" strokeWidth="1.500" />
              </svg>
              <svg width="17" height="17" viewBox="0 0 17 17">
                <path d="M1 13V8h2v3l1-6h2v4l1-3h2v7z" fill="#ccc" />
              </svg>
            </AdjustRow>
            <AdjustRow $indent={28}>
              <svg width="17" height="16" viewBox="0 0 17 16">
                <rect x=".5" y="2.500" width="15" height="12" fill="url(#fade)" stroke="#ddd" />
                <path d="M1 3h14v5H1z" fill="#ccc" />
                <path d="M4.500 3v4M8.500 3v4M12.500 3v4" stroke="#777" />
              </svg>
              <svg width="18" height="16" viewBox="0 0 18 16" fill="none" stroke="#ddd">
                <path d="M9 1v4M3 3.500h12" strokeWidth="2" />
                <path d="M4.500 4 1.500 11h6zM13.500 4l-3 7h6z" />
                <path d="M1 11c0 4 7 4 7 0zM10 11c0 4 7 4 7 0z" fill="#ddd" stroke="none" />
              </svg>
            </AdjustRow>
            <AdjustRow $indent={40}>
              <svg width="17" height="16" viewBox="0 0 17 16">
                <rect x=".5" y="2.500" width="15" height="12" fill="#666" stroke="#ddd" />
                <path d="M15 3v11H3c6 0 10-4 9-11z" fill="#ddd" />
                <ellipse cx="8" cy="8.500" rx="4.500" ry="2.500" transform="rotate(-35 8 8.500)" fill="#ccc" stroke="#333" />
              </svg>
              <svg width="17" height="16" viewBox="0 0 17 16">
                <rect x=".5" y="2.500" width="15" height="12" fill="#888" stroke="#ddd" />
                <path d="M1 14 15 3v11z" fill="#ddd" />
              </svg>
            </AdjustRow>
          </AdjustBody>
        </PanelBox>
        <PanelBox>
          <TabStrip>
            <Tab $active>图层</Tab>
            <Tab>通道</Tab>
          </TabStrip>
          <LayerBar $h={27} $line>
            <FilterSelect $w={71}>
              <svg width="11" height="12" viewBox="0 0 11 12" fill="none" stroke="#ddd">
                <circle cx="6.500" cy="4.500" r="3.500" strokeWidth="1.600" />
                <path d="M4 7.500 1 11" strokeWidth="2" />
              </svg>
              <select aria-label="图层过滤" defaultValue="类型">
                <option>类型</option>
              </select>
              <UpDown />
            </FilterSelect>
          </LayerBar>
          <LayerBar $h={27} $line>
            <SelectBox $w={130}>
              <select aria-label="混合模式" defaultValue="正常">
                <option>正常</option>
              </select>
              <UpDown />
            </SelectBox>
          </LayerBar>
          <LayerBar $h={31} $line>
            <Caption $w={30}>锁定：</Caption>
            <svg width="12" height="12" viewBox="0 0 12 12">
              <path d="M0 0h12v12H0z" fill="#8e8e8e" />
              <path d="M3 0h3v3H3zM9 0h3v3H9zM0 3h3v3H0zM6 3h3v3H6zM3 6h3v3H3zM9 6h3v3H9zM0 9h3v3H0zM6 9h3v3H6z" fill="#666" />
            </svg>
            <svg width="18" height="14" viewBox="0 0 18 14">
              <path d="M17 0 9 10 7 8zM7 8l2 2c-1 3-5 4-9 3 2-1 3-5 7-5z" fill="#aaa" />
            </svg>
          </LayerBar>
          <ul>
            <LayerRow>
              <EyeButton aria-label="切换可见性">
                <Eye />
              </EyeButton>
              <LayerFace $selected>
                <svg width="37" height="37" viewBox="0 0 37 37">
                  <rect x="3" y="3" width="32" height="32" fill="#fff" />
                  {cells.map((c) => (
                    <rect key={`${c.x}-${c.y}`} x={3 + c.x * 4} y={3 + c.y * 4} width="4" height="4" fill="#ccc" />
                  ))}
                  <rect x="2.500" y="2.500" width="32" height="32" fill="none" stroke="#111" />
                  <path d="M21 21h16v16H21z" fill="#6a7a94" />
                  <path d="M21.500 35V21.500H35" fill="none" stroke="#111" />
                  <g fill="none" stroke="#dfe6f2">
                    <rect x="24.500" y="24.500" width="8" height="8" />
                    <path d="M23.500 23.500h2v2h-2zM31.500 23.500h2v2h-2zM23.500 31.500h2v2h-2zM31.500 31.500h2v2h-2z" />
                  </g>
                  <path d="M.500 12V.500H12M25 .500h11.500V12M.500 25v11.500H12M25 36.500h11.500V25" fill="none" stroke="#fff" />
                </svg>
                椭圆 1
              </LayerFace>
            </LayerRow>
            <LayerRow>
              <EyeButton aria-label="切换可见性">
                <Eye />
              </EyeButton>
              <LayerFace>
                <svg width="37" height="37" viewBox="0 0 37 37">
                  <rect x="2.500" y="2.500" width="32" height="32" fill="#fff" stroke="#111" />
                </svg>
              </LayerFace>
            </LayerRow>
          </ul>
        </PanelBox>
      </Panels>
    </RightColumns>
  </RightSide>
);

const Defs = styled.svg`
  position: absolute;
`;

export default function App() {
  return (
    <Shell>
      <GlobalStyle />
      <Defs width="0" height="0" aria-hidden="true">
        <linearGradient id="steel" x1="0" y1="0" x2="0" y2="1">
          <stop offset="0" stopColor="#a8a8a8" />
          <stop offset="1" stopColor="#757575" />
        </linearGradient>
        <linearGradient id="fade">
          <stop offset="0" stopColor="#333" />
          <stop offset="1" stopColor="#e8e8e8" />
        </linearGradient>
      </Defs>
      <TopBar />
      <Workspace>
        <Toolbar />
        <Document />
        <RightDocks />
        <Properties />
        <ShapeFlyout />
        <Highlight $x={4} $y={472} $w={40} $h={28} />
        <Highlight $x={39} $y={510} $w={158} $h={24} />
      </Workspace>
    </Shell>
  );
}
